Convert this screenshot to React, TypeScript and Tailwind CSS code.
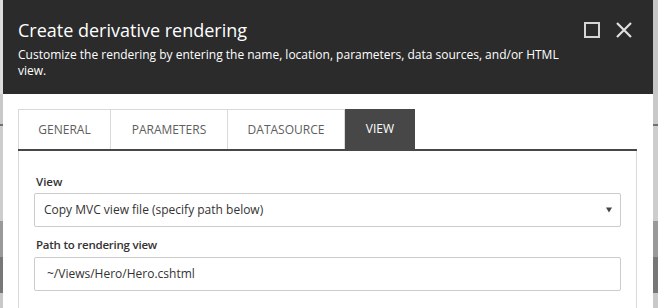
const TABS = ["GENERAL", "PARAMETERS", "DATASOURCE", "VIEW"];
const TAB_W = ["w-[93px]", "w-[117px]", "w-[117px]", "w-[70px]"];

const Caret = () => (
  <svg viewBox="0 0 6 6" width="6" height="6" fill="#444">
    <path d="M0 0.5h6L3 5.5z" />
  </svg>
);

function Strip({ right }: { right?: boolean }) {
  return (
    <div className={`flex shrink-0 flex-col ${right ? "w-[5px]" : "w-[3px]"} h-[308px]`}>
      <div className={`h-[94px] ${right ? "bg-[#c6c6c6]" : "bg-[#dcdcdc]"}`} />
      <div className="h-[30px] bg-[#c8c8c8]" />
      <div className="h-[2px] bg-[#707070]" />
      <div className="h-[95px] bg-[#cdcdcd]" />
      <div className="h-[36px] bg-[#999999]" />
      <div className="h-[36px] bg-[#777777]" />
      <div className="flex-1 bg-[#c8c8c8]" />
    </div>
  );
}

export default function App() {
  return (
    <div className="flex w-[658px] h-[308px] overflow-hidden bg-white font-['Open_Sans',sans-serif]">
      <Strip />
      <div className="flex w-[650px] shrink-0 flex-col">
        {/* header */}
        <div className="flex h-[94px] shrink-0 bg-[#2b2b2b] pl-[15px] pr-[21px] pt-[17px]">
          <div className="flex-1">
            <h1 className="text-[18px] leading-[26px] text-white">Create derivative rendering</h1>
            <p className="mt-[4px] max-w-[548px] text-[12px] leading-[16px] text-white">
              Customize the rendering by entering the name, location, parameters, data sources, and/or HTML view.
            </p>
          </div>
          <div className="flex gap-[16px] pt-[5px]">
            <div className="h-[16px] w-[16px] border-2 border-[#d6d6d6]" />
            <svg viewBox="0 0 16 16" width="16" height="16" stroke="#e0e0e0" strokeWidth="2.2">
              <path d="M1 1l14 14M15 1L1 15" />
            </svg>
          </div>
        </div>

        {/* tabs + body */}
        <div className="pl-[15px] pr-[16px] pt-[15px]">
          <div className="flex h-[42px] border-b-2 border-[#474747]">
            {TABS.map((t, i) => {
              const active = t === "VIEW";
              return (
                <div
                  key={t}
                  className={`flex items-center justify-center text-[12px] ${TAB_W[i]} ${
                    active
                      ? "bg-[#474747] text-white"
                      : "border-t border-r border-[#d9d9d9] text-[#5e5e5e] first:border-l"
                  }`}
                >
                  {t}
                </div>
              );
            })}
          </div>
          <div className="border-x border-[#d9d9d9] px-[15px] pt-[22px] pb-[20px]">
            <label className="ml-[2px] block text-[11.5px] font-semibold leading-[18px] text-[#333]">View</label>
            <div className="mt-[2px] flex h-[34px] items-center justify-between rounded-[2px] border border-[#cccccc] pl-[9px] pr-[8px] text-[12px] text-[#333]">
              <span>Copy MVC view file (specify path below)</span>
              <Caret />
            </div>
            <label className="ml-[2px] mt-[9px] block text-[11.5px] font-semibold leading-[18px] tracking-[-0.02em] text-[#333]">
              Path to rendering view
            </label>
            <div className="mt-[3px] flex h-[34px] items-center rounded-[2px] border border-[#cccccc] pl-[12px] text-[12px] text-[#333]">
              ~/Views/Hero/Hero.cshtml
            </div>
          </div>
        </div>
      </div>
      <Strip right />
    </div>
  );
}
